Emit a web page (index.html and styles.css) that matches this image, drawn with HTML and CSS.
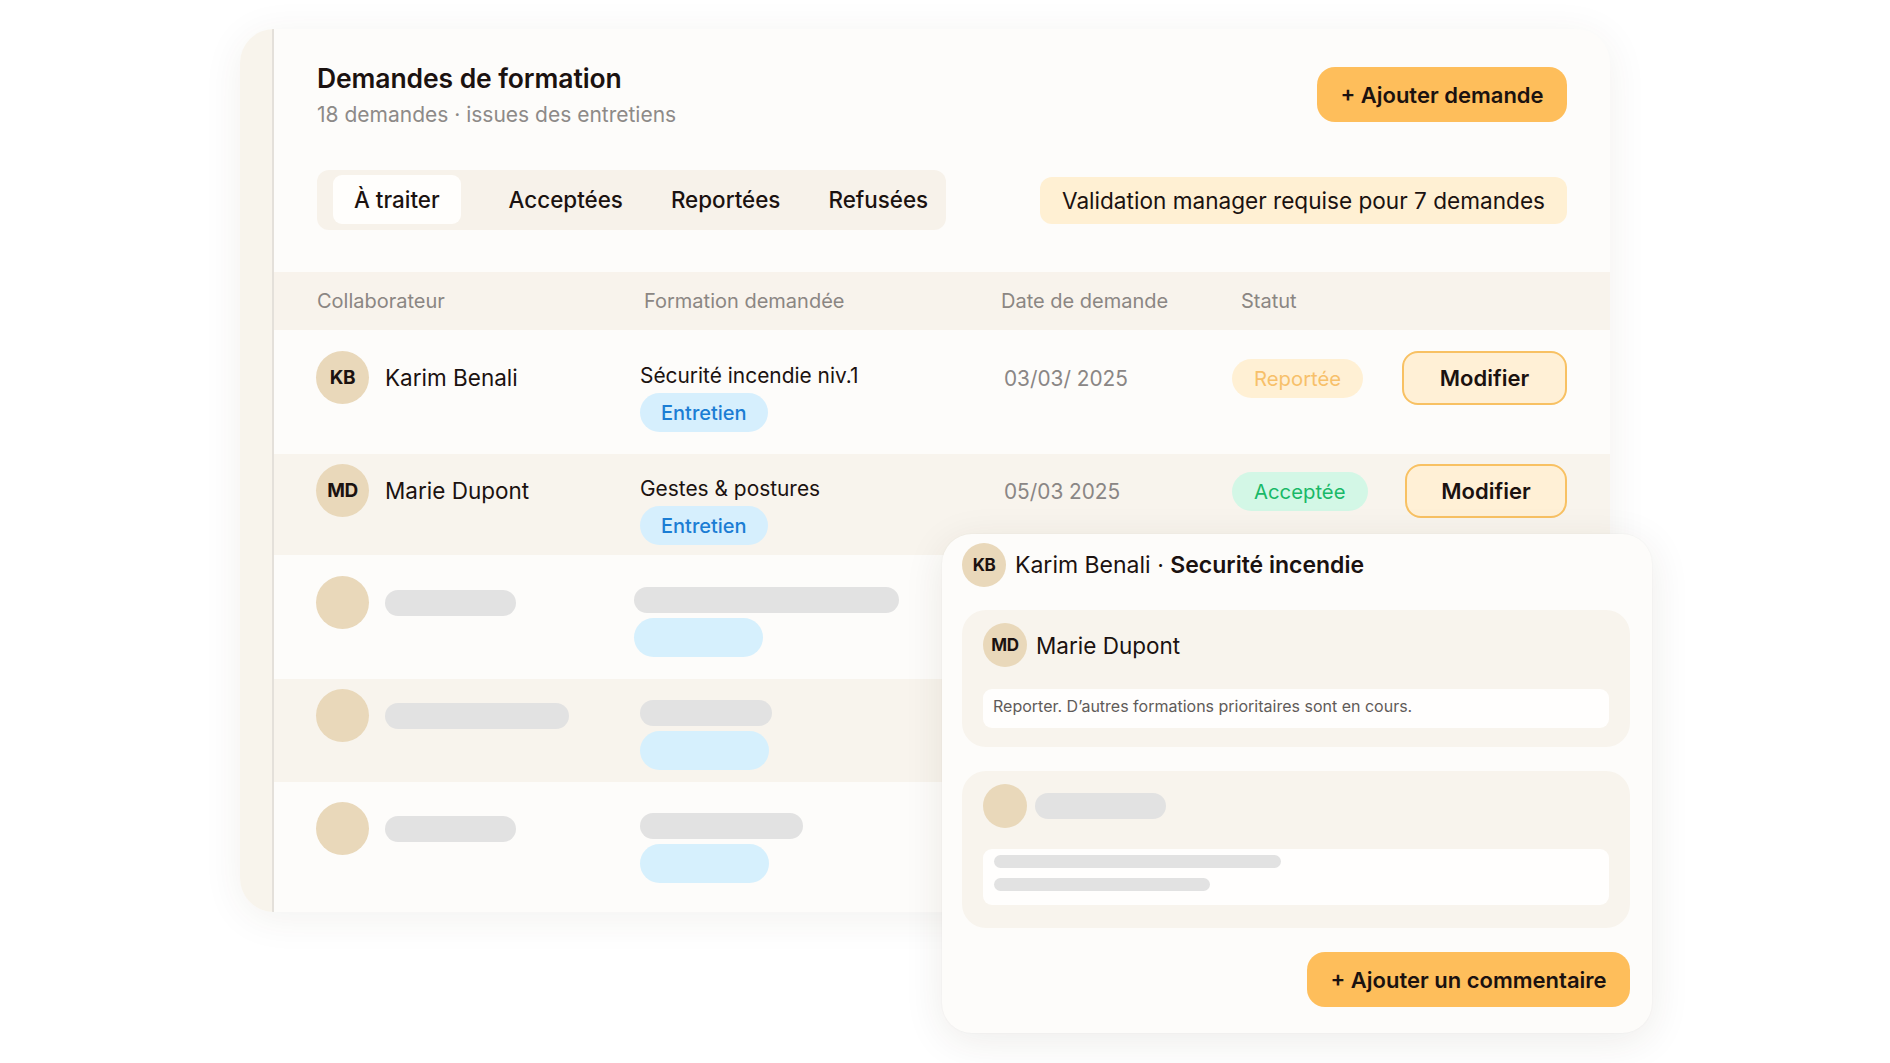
FILE: index.html
```html
<!DOCTYPE html>
<html lang="fr">
<head>
<meta charset="utf-8">
<title>Demandes de formation</title>
<link rel="stylesheet" href="styles.css">
</head>
<body>
<div class="page">
  <section class="card">
    <div class="card-strip"></div>
    <div class="card-main">
      <header class="card-head">
        <div class="head-text">
          <h1 class="title">Demandes de formation</h1>
          <p class="subtitle">18 demandes · issues des entretiens</p>
        </div>
        <button class="btn-primary btn-add">+ Ajouter demande</button>
      </header>

      <div class="toolbar">
        <nav class="tabs">
          <span class="tab tab-active">À traiter</span>
          <span class="tab">Acceptées</span>
          <span class="tab">Reportées</span>
          <span class="tab">Refusées</span>
        </nav>
        <div class="banner">Validation manager requise pour 7 demandes</div>
      </div>

      <div class="table">
        <div class="thead">
          <span>Collaborateur</span>
          <span>Formation demandée</span>
          <span>Date de demande</span>
          <span>Statut</span>
        </div>

        <div class="row row-white row-first">
          <div class="cell-person"><span class="avatar">KB</span><span class="name">Karim Benali</span></div>
          <div class="cell-formation pad-12"><div class="formation">Sécurité incendie niv.1</div><span class="badge">Entretien</span></div>
          <div class="cell-mid date">03/03/ 2025</div>
          <div class="cell-mid"><span class="pill pill-reportee">Reportée</span></div>
          <div class="cell-mid"><button class="btn-modifier">Modifier</button></div>
        </div>

        <div class="row row-beige row-second">
          <div class="cell-person"><span class="avatar">MD</span><span class="name">Marie Dupont</span></div>
          <div class="cell-formation pad-13"><div class="formation">Gestes &amp; postures</div><span class="badge">Entretien</span></div>
          <div class="cell-mid date">05/03 2025</div>
          <div class="cell-mid"><span class="pill pill-acceptee">Acceptée</span></div>
          <div class="cell-mid"><button class="btn-modifier btn-modifier-b">Modifier</button></div>
        </div>

        <div class="row row-white sk-row-a">
          <div class="cell-person"><span class="avatar"></span><span class="sk sk-name w131"></span></div>
          <div class="sk-formation shift-left"><span class="sk sk-line w265"></span><span class="sk sk-blue"></span></div>
        </div>

        <div class="row row-beige sk-row-b">
          <div class="cell-person"><span class="avatar"></span><span class="sk sk-name w184"></span></div>
          <div class="sk-formation"><span class="sk sk-line w132"></span><span class="sk sk-blue"></span></div>
        </div>

        <div class="row row-white sk-row-c">
          <div class="cell-person"><span class="avatar"></span><span class="sk sk-name w131"></span></div>
          <div class="sk-formation"><span class="sk sk-line w163"></span><span class="sk sk-blue"></span></div>
        </div>
      </div>
    </div>
  </section>

  <aside class="popup">
    <div class="popup-head">
      <span class="avatar avatar-sm">KB</span>
      <span class="popup-title">Karim Benali · <strong>Securité incendie</strong></span>
    </div>

    <div class="comment">
      <div class="comment-author">
        <span class="avatar avatar-sm avatar-md">MD</span>
        <span class="name">Marie Dupont</span>
      </div>
      <div class="comment-body">Reporter. D’autres formations prioritaires sont en cours.</div>
    </div>

    <div class="comment comment-skeleton">
      <div class="comment-author">
        <span class="avatar avatar-sm avatar-md"></span>
        <span class="sk sk-name w131"></span>
      </div>
      <div class="comment-body comment-body-sk">
        <span class="sk sk-thin w287"></span>
        <span class="sk sk-thin w216"></span>
      </div>
    </div>

    <div class="popup-actions">
      <button class="btn-primary btn-comment">+ Ajouter un commentaire</button>
    </div>
  </aside>
</div>
</body>
</html>
```

FILE: styles.css
```css
* { box-sizing: border-box; }

html, body {
  margin: 0;
  padding: 0;
  background: #ffffff;
}

body {
  width: 1890px;
  height: 1063px;
  overflow: hidden;
  font-family: Inter, "Noto Sans", "Liberation Sans", sans-serif;
  color: #1b1411;
}

.page {
  position: relative;
  width: 1890px;
  height: 1063px;
  padding: 29px 0 0 240px;
}

/* ---------- main card ---------- */
.card {
  display: flex;
  width: 1370px;
  height: 883px;
  background: #fdfcfa;
  border-radius: 34px;
  overflow: hidden;
  box-shadow: 0 6px 40px rgba(70, 50, 30, 0.07);
}

.card-strip {
  width: 34px;
  flex: 0 0 34px;
  background: #f8f4ec;
  border-right: 2px solid #e4e0da;
}

.card-main {
  flex: 1;
  display: flex;
  flex-direction: column;
}

.card-head {
  display: flex;
  justify-content: space-between;
  align-items: flex-start;
  padding: 32px 43px 0 43px;
}

.title {
  margin: 0;
  font-size: 26.5px;
  line-height: 34px;
  font-weight: 600;
  letter-spacing: -0.1px;
  color: #1b1210;
}

.subtitle {
  margin: 6px 0 0 0;
  font-size: 21px;
  line-height: 28px;
  color: #8d8a88;
}

.btn-primary {
  border: none;
  background: #febe5b;
  color: #1b1210;
  font-family: inherit;
  font-weight: 600;
  font-size: 22px;
  height: 55px;
  padding: 0 22px;
  border-radius: 18px;
}

.btn-add {
  margin-top: 6px;
  width: 250px;
}

/* ---------- toolbar ---------- */
.toolbar {
  display: flex;
  justify-content: space-between;
  align-items: center;
  padding: 0 43px;
  margin-top: 41px;
  height: 60px;
}

.tabs {
  display: flex;
  gap: 48px;
  height: 60px;
  padding: 5px 18px 6px 16px;
  background: #f7f2ea;
  border-radius: 12px;
}

.tab {
  display: flex;
  align-items: center;
  padding: 0;
  font-size: 22.4px;
  font-weight: 500;
  color: #1b1210;
  border-radius: 9px;
}

.tab-active {
  padding: 0 21px;
  background: #fffefc;
}

.banner {
  display: flex;
  align-items: center;
  height: 47px;
  padding: 0 22px;
  border-radius: 12px;
  background: #fff0d3;
  font-size: 22.6px;
  color: #1b1210;
}

/* ---------- table ---------- */
.table {
  margin-top: 42px;
  display: flex;
  flex-direction: column;
}

.thead {
  display: grid;
  grid-template-columns: 327px 357px 240px 1fr;
  align-items: center;
  height: 58px;
  padding: 0 43px;
  background: #f8f3ec;
  font-size: 20px;
  color: #8b8683;
}

.row {
  display: grid;
  grid-template-columns: 324px 364px 228px 1fr auto;
  align-items: start;
  padding-left: 42px;
  padding-right: 43px;
}

.row-white { background: #fdfcfa; }
.row-beige { background: #f8f4ed; }

.row-first  { padding-top: 21px; padding-bottom: 22px; }
.row-second { padding-top: 10px; padding-bottom: 10px; }
.sk-row-a   { padding-top: 21px; padding-bottom: 22px; }
.sk-row-b   { padding-top: 10px; padding-bottom: 12px; }
.sk-row-c   { padding-top: 20px; padding-bottom: 28px; }

.cell-person {
  display: flex;
  align-items: center;
  gap: 16px;
  height: 53px;
}

.avatar {
  display: flex;
  align-items: center;
  justify-content: center;
  width: 53px;
  height: 53px;
  flex: 0 0 53px;
  border-radius: 50%;
  background: #e9d8ba;
  font-size: 19px;
  font-weight: 700;
  letter-spacing: -0.4px;
  color: #1b1210;
}

.name {
  font-size: 22.5px;
  color: #1b1210;
}

.cell-formation {
  display: flex;
  flex-direction: column;
  align-items: flex-start;
}

.pad-12 { padding-top: 12px; }
.pad-13 { padding-top: 12px; }

.formation {
  font-size: 20.9px;
  line-height: 26px;
  color: #1b1210;
}

.badge {
  margin-top: 4px;
  display: inline-flex;
  align-items: center;
  height: 39px;
  padding: 0 21px;
  border-radius: 20px;
  background: #d6effd;
  color: #1b7dd4;
  font-size: 20px;
  font-weight: 500;
}

.cell-mid {
  display: flex;
  align-items: center;
  height: 54px;
}

.date {
  font-size: 20.8px;
  color: #8a8685;
}

.pill {
  display: inline-flex;
  align-items: center;
  height: 39px;
  padding: 0 22px;
  border-radius: 20px;
  font-size: 20.3px;
}

.pill-reportee { background: #fff0d4; color: #f7c06a; }
.pill-acceptee { background: #d3f7e6; color: #19b968; }

.btn-modifier {
  height: 54px;
  width: 165px;
  border: 2px solid #f8c163;
  background: #fff0d6;
  border-radius: 16px;
  font-family: inherit;
  font-weight: 600;
  font-size: 22px;
  color: #1b1210;
}

.btn-modifier-b { width: 162px; }

/* ---------- skeletons ---------- */
.sk {
  display: block;
  border-radius: 14px;
  background: #e2e2e2;
}

.sk-name { height: 26px; }
.sk-line { height: 26px; }

.sk-formation {
  display: flex;
  flex-direction: column;
  gap: 5px;
  padding-top: 11px;
}

.shift-left { margin-left: -6px; }

.sk-blue {
  width: 129px;
  height: 39px;
  border-radius: 20px;
  background: #d6f0fd;
}

.sk-thin {
  height: 13px;
  border-radius: 7px;
}

.w131 { width: 131px; }
.w132 { width: 132px; }
.w163 { width: 163px; }
.w184 { width: 184px; }
.w216 { width: 216px; }
.w265 { width: 265px; }
.w287 { width: 287px; }

/* ---------- popup ---------- */
.popup {
  position: absolute;
  left: 942px;
  top: 534px;
  width: 710px;
  height: 499px;
  padding: 8px 22px 26px 20px;
  background: #fdfcfa;
  border-radius: 30px;
  box-shadow: 0 8px 40px rgba(60, 40, 20, 0.09), 0 0 2px rgba(60, 40, 20, 0.05);
  display: flex;
  flex-direction: column;
}

.popup-head {
  display: flex;
  align-items: center;
  gap: 9px;
  height: 45px;
}

.avatar-sm {
  width: 44px;
  height: 44px;
  flex: 0 0 44px;
  font-size: 17px;
}

.popup-title {
  font-size: 23px;
  color: #1b1210;
}

.popup-title strong {
  font-weight: 600;
}

.comment {
  margin-top: 23px;
  padding: 13px 21px 19px 21px;
  background: #f8f4ed;
  border-radius: 24px;
  display: flex;
  flex-direction: column;
}

.comment-skeleton {
  margin-top: 24px;
  padding-bottom: 23px;
}

.comment-author {
  display: flex;
  align-items: center;
  gap: 9px;
  height: 44px;
}

.comment-skeleton .comment-author { gap: 8px; }

.comment-body {
  margin-top: 22px;
  height: 39px;
  display: flex;
  align-items: center;
  padding: 0 10px 5px 10px;
  background: #fffefd;
  border-radius: 9px;
  font-size: 16px;
  color: #5f5b59;
}

.comment-body-sk {
  margin-top: 21px;
  height: 56px;
  flex-direction: column;
  align-items: flex-start;
  justify-content: flex-start;
  gap: 10px;
  padding: 6px 11px 14px 11px;
}

.popup-actions {
  margin-top: 24px;
  display: flex;
  justify-content: flex-end;
}

.btn-comment {
  width: 323px;
  border-radius: 18px;
}
```
